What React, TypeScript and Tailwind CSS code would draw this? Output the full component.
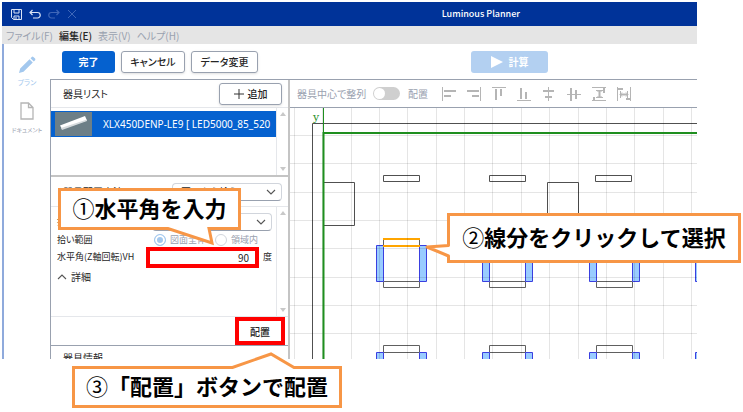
import React from "react";

const unitColumns = [86, 192, 299, 405];
const unitRows = [130, 237];
const gridLines = Array.from({ length: 60 }, (_, i) => i);

// thin: guide line, bold: the aligned bars
const alignIcons = [
  { label: "左揃え", thin: "M.5 0v14", bold: "M2 4h12M2 9h7" },
  { label: "右揃え", thin: "M13.5 0v14", bold: "M0 4h12M5 9h7" },
  { label: "上揃え", thin: "M0 .5h14", bold: "M4 2v11M9 2v7" },
  { label: "下揃え", thin: "M0 13.5h14", bold: "M4 1v11M9 5v7" },
  { label: "左右中央", thin: "M6.5 0v14", bold: "M1 4h11M3 10h7" },
  { label: "上下中央", thin: "M0 7.5h14", bold: "M4 1v13M9 3v9" },
  {
    label: "縦に均等",
    thin: "M0 .5h14M0 13.5h14M4 3.5h7M4 10.5h7M5.500 5l2-2 2 2M5.500 9l2 2 2-2",
    bold: "M7.500 3v8M2 10v3M12 1v5",
  },
  {
    label: "横に均等",
    thin: "M.5 0v14M13.5 0v14M3.500 4v7M10.500 4v7M5 5.500l-2 2 2 2M9 5.500l2 2-2 2",
    bold: "M3 7.500h8M1 2h5M9 12h4",
  },
];

const Chevron: React.FC<{ className?: string; up?: boolean }> = ({
  className = "",
  up,
}) => {
  return (
    <svg
      viewBox="0 0 10 6"
      fill="none"
      stroke="#555"
      strokeWidth="1.1"
      className={`w-2.5 h-1.5 ${className}`}
    >
      <path d={up ? "M1 5l4-4 4 4" : "M1 1l4 4 4-4"} />
    </svg>
  );
};

const ScrollTrack: React.FC = () => {
  return (
    <div className="flex flex-col items-center justify-between w-3 py-1 border-l border-gray-200 shrink-0">
      <svg viewBox="0 0 6 4" fill="#c8c8c8" className="w-1.5 h-1">
        <path d="M3 0l3 4H0z" />
      </svg>
      <svg viewBox="0 0 6 4" fill="#c8c8c8" className="w-1.5 h-1">
        <path d="M0 0h6L3 4z" />
      </svg>
    </div>
  );
};

const SelectBox: React.FC<{ label: string; value: string; className: string }> = ({
  label,
  value,
  className,
}) => {
  return (
    <div className={`relative ${className}`}>
      <select
        aria-label={label}
        className="block w-full h-[18px] pl-2 text-[10px] leading-4 bg-white border border-gray-300 border-b-gray-400 rounded-sm appearance-none"
      >
        <option>{value}</option>
      </select>
      <Chevron className="absolute right-1.5 top-1.5 pointer-events-none" />
    </div>
  );
};

const TitleBar: React.FC = () => {
  return (
    <header className="flex items-center h-6 pl-[9px] bg-[#003399] text-white">
      <div className="flex items-center gap-[7px]">
        <button aria-label="保存">
          <svg viewBox="0 0 11 11" fill="none" stroke="#dbe4f5" className="w-[11px] h-[11px]">
            <path d="M.5.5h10v10h-8l-2-2zM3 .5v3.5h5V.5M3 10.500V7h5v3.500M5 8v2.500" />
          </svg>
        </button>
        <button aria-label="元に戻す">
          <svg viewBox="0 0 12 11" fill="none" stroke="#dbe4f5" strokeWidth="1.2" className="w-3 h-[11px]">
            <path d="M3.500 1L1 3.500 3.500 6M1 3.500h7.500a2.500 2.500 0 010 5.500H4" />
          </svg>
        </button>
        <button aria-label="やり直す">
          <svg viewBox="0 0 12 11" fill="none" stroke="#3f67b8" strokeWidth="1.2" className="w-3 h-[11px]">
            <path d="M8.500 1L11 3.500 8.500 6M11 3.500H3.500a2.500 2.500 0 000 5.500H7" />
          </svg>
        </button>
        <button aria-label="削除">
          <svg viewBox="0 0 10 10" fill="none" stroke="#3f67b8" className="w-2.5 h-2.5">
            <path d="M1 1l8 8M9 1L1 9" />
          </svg>
        </button>
      </div>
      <h1 className="ml-auto mr-[177px] text-[9px] font-medium">Luminous Planner</h1>
    </header>
  );
};

const MenuBar: React.FC = () => {
  return (
    <nav className="flex items-center h-[18px] gap-1.5 pl-1 bg-[#e5e5e5] text-[10px] text-gray-400">
      <a href="#">ファイル(F)</a>
      <a href="#" className="font-medium text-neutral-800">
        編集(E)
      </a>
      <a href="#">表示(V)</a>
      <a href="#">ヘルプ(H)</a>
    </nav>
  );
};

const SideBar: React.FC = () => {
  return (
    <aside className="flex flex-col items-center w-[46px] pt-3 shrink-0">
      <a href="#" className="flex flex-col items-center text-[7px] leading-3 text-[#a3c8ee]">
        <svg viewBox="0 0 18 18" fill="#a3c8ee" className="w-[18px] h-[18px]">
          <path d="M1 17l1.200-4.500L11.500 3.200l3.300 3.300L5.500 15.800zM12.500 2.200l1.300-1.300q.8-.6 1.600 0l1.700 1.700q.6.8 0 1.600l-1.300 1.300z" />
        </svg>
        <span className="mt-0.5">プラン</span>
      </a>
      <a href="#" className="flex flex-col items-center mt-3.5 text-[6px] leading-3 text-gray-400">
        <svg viewBox="0 0 14 18" fill="none" stroke="#b5b5b5" strokeWidth="1.3" className="w-3.5 h-[18px]">
          <path d="M1 1h7.500L13 5.500V17H1zM8.500 1v4.500H13" />
        </svg>
        <span className="mt-1">ドキュメント</span>
      </a>
    </aside>
  );
};

const ToolBar: React.FC = () => {
  return (
    <div className="flex items-center gap-1.5 h-9 pl-3 border-b border-gray-400 text-[10px] font-medium">
      <button className="w-[53px] h-[22px] rounded-[3px] bg-[#0561cf] text-white font-bold">
        完了
      </button>
      <button className="w-16 h-[22px] rounded-[3px] border border-gray-400 shadow-sm">
        キャンセル
      </button>
      <button className="w-[67px] h-[22px] rounded-[3px] border border-gray-400 shadow-sm">
        データ変更
      </button>
      <button className="flex items-center justify-center gap-1.5 w-[77px] h-[22px] ml-auto mr-[149px] rounded-[3px] bg-[#b3d0f1] text-white font-bold">
        <svg viewBox="0 0 12 12" fill="#fff" className="w-3 h-3">
          <path d="M0 0l12 6-12 6z" />
        </svg>
        計算
      </button>
    </div>
  );
};

const FixturePanel: React.FC = () => {
  return (
    <section className="w-60 border-l border-r-2 border-l-gray-400 border-r-[#c4c4c4] shrink-0">
      <div className="flex items-center justify-between h-7 pl-3 pr-1.5 border-b border-gray-200">
        <h2 className="text-[10px]">器具リスト</h2>
        <button className="flex items-center justify-center gap-1 w-[63px] h-[22px] rounded-[3px] border border-gray-400 shadow-sm text-[10px] font-medium">
          <svg viewBox="0 0 10 10" fill="none" stroke="#333" className="w-2.5 h-2.5">
            <path d="M5 0v10M0 5h10" />
          </svg>
          追加
        </button>
      </div>

      <div className="flex h-[69px] border-b-2 border-[#c4c4c4]">
        <ul className="flex-1 min-w-0 pt-[3px]">
          <li className="flex items-center h-[26px] pl-1 pr-2 bg-[#0561cf] text-white">
            <svg viewBox="0 0 37 24" className="w-[37px] h-6 shrink-0">
              <path fill="#6d7f87" d="M0 0h37v24H0z" />
              <path fill="#fff" d="M5 13.500L30 4l2 4.500L7 17z" />
              <path fill="#d5dadd" d="M6 16l26-8.500v1.500L7 18z" />
            </svg>
            <span className="ml-[11px] whitespace-nowrap text-[10px] font-['Noto_Sans']">
              XLX450DENP-LE9 [ LED5000_85_520
            </span>
          </li>
        </ul>
        <ScrollTrack />
      </div>

      <div className="flex items-center justify-between h-[30px] pl-3 pr-1.5 border-b border-gray-200">
        <h2 className="text-[10px]">器具配置方法</h2>
        <SelectBox label="器具配置方法" value="図面から拾う" className="w-[110px]" />
      </div>

      <div className="flex h-[110px] border-b border-gray-200 text-[9px]">
        <div className="flex-1 min-w-0 pt-1.5 pl-1.5 pr-1">
          <div className="flex items-center justify-between">
            <span>拾い方法</span>
            <SelectBox label="拾い方法" value="線分" className="w-[120px]" />
          </div>
          <div className="flex items-center h-[18px] text-gray-400">
            <span className="w-[97px] text-neutral-800">拾い範囲</span>
            <label className="flex items-center gap-1 w-[61px]">
              <input
                type="radio"
                name="range"
                defaultChecked
                className="w-3 h-3 border border-[#a3c8ee] rounded-full appearance-none bg-[#a3c8ee] ring-2 ring-white ring-inset"
              />
              図面全体
            </label>
            <label className="flex items-center gap-1">
              <input
                type="radio"
                name="range"
                className="w-3 h-3 border border-gray-300 rounded-full appearance-none"
              />
              領域内
            </label>
          </div>
          <div className="flex items-center h-4">
            <label htmlFor="angle" className="w-[89px] shrink-0">
              水平角(Z軸回転)VH
            </label>
            <input
              id="angle"
              defaultValue="90"
              className="w-[113px] h-[21px] pr-1.5 border-4 border-[#ff0000] bg-white text-[10px] text-right shrink-0"
            />
            <span className="ml-1">度</span>
          </div>
          <button className="flex items-center gap-1 mt-1 text-[10px]">
            <Chevron up />
            詳細
          </button>
        </div>
        <ScrollTrack />
      </div>

      <div className="flex justify-end h-[29px] pr-[3px] border-b border-gray-400">
        <button className="w-[50px] h-7 border-4 border-[#ff0000] text-[10px] font-medium">
          配置
        </button>
      </div>
      <div className="h-[13px] pt-1 pl-3 overflow-hidden">
        <h2 className="text-[10px]">器具情報</h2>
      </div>
    </section>
  );
};

const PlanView: React.FC = () => {
  return (
    <main className="flex flex-col flex-1 min-w-0">
      <div className="flex items-center h-7 pl-[7px] border-b border-gray-400 text-[10px] text-gray-400">
        <label htmlFor="center" className="w-[70px]">
          器具中心で整列
        </label>
        <span className="relative flex ml-1.5">
          <input
            id="center"
            type="checkbox"
            role="switch"
            className="w-[27px] h-[13px] rounded-full appearance-none bg-[#cfcfcf]"
          />
          <span className="absolute w-[11px] h-[11px] bg-white rounded-full left-px top-px pointer-events-none" />
        </span>
        <span className="ml-2">配置</span>
        <div className="flex gap-[11px] ml-3.5">
          {alignIcons.map((icon) => {
            return (
              <button key={icon.label} aria-label={icon.label}>
                <svg viewBox="0 0 14 14" fill="none" stroke="#b5b5b5" className="w-3.5 h-3.5">
                  <path d={icon.thin} />
                  <path strokeWidth="2" d={icon.bold} />
                </svg>
              </button>
            );
          })}
        </div>
      </div>

      <svg className="flex-1 w-full min-h-0" fill="none">
        {/* walls and openings */}
        <g stroke="#505050">
          <path d="M22.500 400V15.500H2000" />
          <path d="M33.500 74.500h31v43h-31M257.500 74.500h31v43h-31z" />
          <path d="M93.500 67.500h36v6h-36zM199.500 67.500h36v6h-36zM305.500 67.500h36v6h-36z" />
        </g>

        {/* desks with the side cabinets */}
        {unitRows.map((y) =>
          unitColumns.map((x) => (
            <g key={`${x}-${y}`} transform={`translate(${x} ${y})`}>
              <path stroke="#606060" d="M7.500 .5h36v7h-36zM7.500 43.500h36v6h-36z" />
              <path
                fill="#99ccff"
                stroke="#3a3fe0"
                d="M.5 7.500h7v36h-7zM43.500 7.500h7v36h-7z"
              />
            </g>
          ))
        )}
        <path stroke="#ffa500" strokeWidth="2" d="M93 131h37M93 138h37" />

        <g stroke="#000" strokeOpacity="0.1">
          {gridLines.map((i) => (
            <path
              key={i}
              d={`M${Math.round(i * 28.35 + 4) + 0.5} 0v1200M0 ${Math.round(i * 28.35 + 27) + 0.5}h2000`}
            />
          ))}
        </g>
        <path stroke="#1f8f1f" strokeWidth="2" d="M33.500 400V25H2000" />
        <path stroke="#1f8f1f" d="M33.500 0v25" />
        <text x="23" y="13" fill="#1f8f1f" className="font-['DejaVu_Serif'] text-[11px]">
          y
        </text>
      </svg>
    </main>
  );
};

const Callout: React.FC<{
  number: string;
  text: string;
  className: string;
  children: React.ReactNode;
}> = ({ number, text, className, children }) => {
  return (
    <div
      className={`absolute flex items-center justify-center pb-1 border-[3px] border-[#f79646] bg-white text-[22px] font-bold text-black whitespace-nowrap [font-feature-settings:normal] ${className}`}
    >
      <span className="font-normal">{number}</span>
      {text}
      {children}
    </div>
  );
};

const App: React.FC = () => {
  return (
    <div className="relative min-h-screen pt-0.5 pl-0.5 pr-[46px] bg-white text-neutral-800 font-['Noto_Sans_CJK_JP',sans-serif] [font-feature-settings:'palt']">
      <div className="overflow-hidden">
        <TitleBar />
        <MenuBar />
        <div className="flex border-l-2 border-[#8faadc]">
          <SideBar />
          <div className="flex-1 min-w-0">
            <ToolBar />
            <div className="flex">
              <FixturePanel />
              <PlanView />
            </div>
          </div>
        </div>
      </div>

      <Callout number="①" text="水平角を入力" className="left-[58px] top-[188px] w-[183px] h-[42px]">
        <svg viewBox="0 0 50 24" className="absolute w-[50px] h-6 left-[103px] top-[34px]">
          <path fill="#fff" d="M4 1h41v4l3 12L4 4z" />
          <path fill="none" stroke="#f79646" strokeWidth="3" d="M0 3.500h4L48 18l-3-14.500h5" />
        </svg>
      </Callout>
      <Callout number="②" text="線分をクリックして選択" className="left-[447px] top-[213px] w-[294px] h-[50px]">
        <svg viewBox="0 0 28 18" className="absolute w-7 h-[18px] -left-[27px] top-[25px]">
          <path fill="#fff" d="M28 4v11h-3L6 6z" />
          <path fill="none" stroke="#f79646" strokeWidth="3" strokeLinejoin="round" d="M25.500 0v4.500L4 6l21.500 9v3" />
        </svg>
      </Callout>
      <Callout number="③" text="「配置」ボタンで配置" className="left-[72px] top-[366px] w-[270px] h-[42px]">
        <svg viewBox="0 0 72 19" className="absolute w-[72px] h-[19px] left-[153px] -top-[18px]">
          <path fill="#fff" d="M4 16L43 3l23 13v3H4z" />
          <path fill="none" stroke="#f79646" strokeWidth="3" d="M0 16.500h4.500L43 3l23 13.500h6" />
        </svg>
      </Callout>
    </div>
  );
};

export default App;
